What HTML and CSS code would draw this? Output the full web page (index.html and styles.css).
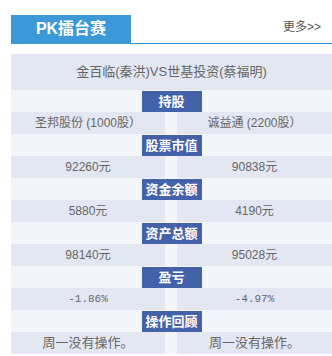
FILE: index.html
```html
<!DOCTYPE html>
<html lang="zh">
<head>
<meta charset="utf-8">
<link rel="stylesheet" href="styles.css">
</head>
<body>
<div class="panel">
  <div class="head">
    <div class="tab">PK擂台赛</div>
    <a class="more">更多&gt;&gt;</a>
  </div>
  <div class="board">
    <div class="title">金百临(秦洪)VS世基投资(蔡福明)</div>
    <div class="sec"><span class="label">持股</span></div>
    <div class="row"><div class="cell">圣邦股份 (1000股）</div><div class="cell">诚益通 (2200股）</div></div>
    <div class="sec"><span class="label">股票市值</span></div>
    <div class="row"><div class="cell">92260元</div><div class="cell">90838元</div></div>
    <div class="sec"><span class="label">资金余额</span></div>
    <div class="row"><div class="cell">5880元</div><div class="cell">4190元</div></div>
    <div class="sec"><span class="label">资产总额</span></div>
    <div class="row"><div class="cell">98140元</div><div class="cell">95028元</div></div>
    <div class="sec"><span class="label">盈亏</span></div>
    <div class="row mono"><div class="cell">-1.86%</div><div class="cell">-4.97%</div></div>
    <div class="sec"><span class="label">操作回顾</span></div>
    <div class="row big"><div class="cell">周一没有操作。</div><div class="cell">周一没有操作。</div></div>
  </div>
</div>
</body>
</html>
```

FILE: styles.css
```css
html, body {
  margin: 0;
  padding: 0;
  background: #fff;
}
body {
  font-family: "Liberation Sans", "Noto Sans CJK SC", sans-serif;
  color: #666;
}
.panel {
  padding: 15px 0 0 11px;
}
.head {
  display: flex;
  justify-content: space-between;
  align-items: flex-end;
  height: 28px;
  border-bottom: 1px solid #3a93d2;
}
.tab {
  width: 120px;
  height: 28px;
  background: #3d98d8;
  color: #fff;
  font-weight: bold;
  font-size: 16px;
  line-height: 28px;
  text-align: center;
}
.more {
  font-size: 12px;
  color: #555;
  line-height: 14px;
  margin: 0 11px 9px 0;
}
.board {
  margin-top: 10px;
  width: 321px;
  background: #f4f5fa;
}
.title {
  height: 36px;
  line-height: 36px;
  background: #e3e7f2;
  text-align: center;
  font-size: 13px;
  color: #666;
}
.sec {
  height: 22px;
  display: flex;
  justify-content: center;
  align-items: flex-start;
}
.label {
  margin-top: 1px;
  width: 60px;
  height: 21px;
  line-height: 21px;
  background: #4462a9;
  color: #fff;
  font-weight: bold;
  font-size: 13px;
  text-align: center;
}
.row {
  height: 22px;
  display: grid;
  grid-template-columns: 154px 155px;
  column-gap: 12px;
}
.cell {
  background: #e3e7f2;
  text-align: center;
  line-height: 22px;
  font-size: 12px;
  color: #666;
}
.mono .cell {
  font-family: "Liberation Mono", monospace;
  font-size: 11px;
}
.big .cell {
  font-size: 13px;
  line-height: 21px;
}
```
